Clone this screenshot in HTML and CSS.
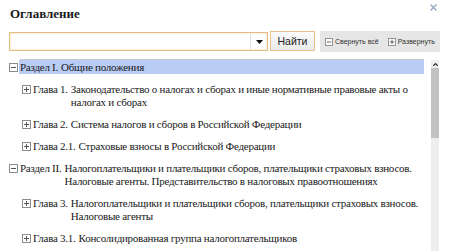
FILE: index.html
```html
<!DOCTYPE html>
<html lang="ru">
<head>
  <meta charset="UTF-8">
  <meta name="viewport" content="width=device-width, initial-scale=1.0">
  <title>Оглавление</title>
  <link rel="stylesheet" href="styles.css">
</head>
<body>
  <svg class="defs" width="0" height="0">
    <symbol id="i-minus" viewBox="0 0 9 9">
      <rect x="0.5" y="0.5" width="8" height="8" fill="#fff" stroke="#8c8c8c"/>
      <path d="M2 4.5h5" stroke="#555"/>
    </symbol>
    <symbol id="i-plus" viewBox="0 0 9 9">
      <rect x="0.5" y="0.5" width="8" height="8" fill="#fff" stroke="#8c8c8c"/>
      <path d="M2 4.5h5M4.5 2v5" stroke="#555"/>
    </symbol>
  </svg>

  <div class="dialog">
    <div class="head">
      <h1 class="title">Оглавление</h1>
      <svg class="close" width="7" height="7" viewBox="0 0 7 7"><path d="M0.5 0.5l6 6M6.5 0.5l-6 6" stroke="#97a6c2" stroke-width="1.4"/></svg>
    </div>

    <div class="search">
      <div class="combo">
        <input class="combo-input" type="text">
        <span class="combo-arrow"><svg width="7" height="4" viewBox="0 0 7 4"><path d="M0 0h7L3.5 4z" fill="#111"/></svg></span>
      </div>
      <button class="find">Найти</button>
      <div class="tools">
        <span class="tool"><svg class="tool-icon"><use href="#i-minus"/></svg>Свернуть всё</span>
        <span class="tool"><svg class="tool-icon"><use href="#i-plus"/></svg>Развернуть</span>
      </div>
    </div>

    <div class="divider"></div>

    <div class="tree-wrap">
      <ul class="tree">
        <li>
          <div class="row">
            <svg class="toggle"><use href="#i-minus"/></svg>
            <div class="label selected"><span class="num">Раздел I.</span><span class="name">Общие положения</span></div>
          </div>
          <ul class="children">
            <li class="row">
              <svg class="toggle"><use href="#i-plus"/></svg>
              <div class="label"><span class="num">Глава 1.</span><span class="name">Законодательство о налогах и сборах и иные нормативные правовые акты о налогах и сборах</span></div>
            </li>
            <li class="row">
              <svg class="toggle"><use href="#i-plus"/></svg>
              <div class="label"><span class="num">Глава 2.</span><span class="name">Система налогов и сборов в Российской Федерации</span></div>
            </li>
            <li class="row">
              <svg class="toggle"><use href="#i-plus"/></svg>
              <div class="label"><span class="num">Глава 2.1.</span><span class="name">Страховые взносы в Российской Федерации</span></div>
            </li>
          </ul>
        </li>
        <li>
          <div class="row">
            <svg class="toggle"><use href="#i-minus"/></svg>
            <div class="label"><span class="num">Раздел II.</span><span class="name">Налогоплательщики и плательщики сборов, плательщики страховых взносов. Налоговые агенты. Представительство в налоговых правоотношениях</span></div>
          </div>
          <ul class="children">
            <li class="row">
              <svg class="toggle"><use href="#i-plus"/></svg>
              <div class="label"><span class="num">Глава 3.</span><span class="name">Налогоплательщики и плательщики сборов, плательщики страховых взносов. Налоговые агенты</span></div>
            </li>
            <li class="row">
              <svg class="toggle"><use href="#i-plus"/></svg>
              <div class="label"><span class="num">Глава 3.1.</span><span class="name">Консолидированная группа налогоплательщиков</span></div>
            </li>
          </ul>
        </li>
      </ul>
      <div class="scrollbar">
        <span class="sb-arrow"><svg width="5" height="3" viewBox="0 0 5 3"><path d="M0.3 2.8L2.5 0.6l2.2 2.2" fill="none" stroke="#222" stroke-width="1.1"/></svg></span>
        <span class="sb-thumb"></span>
      </div>
    </div>
  </div>
</body>
</html>
```

FILE: styles.css
```css
* {
  box-sizing: border-box;
}
body {
  margin: 0;
  background-color: #fff;
  font-family: "Liberation Serif", "Times New Roman", serif;
  color: #1a1a1a;
}
.defs {
  position: absolute;
}
.dialog {
  width: 450px;
  height: 251px;
  overflow: hidden;
  padding: 0 10px 0 9px;
  display: flex;
  flex-direction: column;
}
.head {
  display: flex;
  justify-content: space-between;
  align-items: flex-start;
}
.title {
  margin: 6px 0 0 1px;
  font-size: 13px;
  line-height: 16px;
  font-weight: bold;
}
.close {
  margin: 4px 3px 0 0;
}
.search {
  display: flex;
  align-items: flex-start;
  margin-top: 9px;
  height: 21px;
}
.combo {
  width: 259px;
  height: 19px;
  margin-top: 1px;
  display: flex;
  border: 1px solid #e4bd84;
  box-shadow: inset 0 0 2px rgba(238, 188, 110, 0.7);
  background-color: #fff;
}
.combo-input {
  flex: 1;
  min-width: 0;
  border: none;
  outline: none;
  background: transparent;
}
.combo-arrow {
  width: 17px;
  border-left: 1px solid #e2e2e2;
  display: flex;
  align-items: center;
  justify-content: center;
}
.find {
  margin-left: 2px;
  width: 45px;
  height: 20px;
  padding: 0;
  border: 1px solid #e6c18a;
  background: linear-gradient(#fcfcfc, #e9e9e9);
  font-family: "Liberation Sans", Arial, sans-serif;
  font-size: 10.5px;
  color: #222;
}
.tools {
  margin-left: 5px;
  flex: 1;
  height: 21px;
  background-color: #e6e6e6;
  display: flex;
  align-items: center;
  gap: 9px;
  padding-left: 5px;
  font-family: "Liberation Sans", Arial, sans-serif;
  font-size: 7px;
  color: #333;
  white-space: nowrap;
}
.tool {
  display: flex;
  align-items: center;
  gap: 2px;
}
.tool-icon {
  width: 8px;
  height: 8px;
}
.divider {
  margin: 7px 16px 0 11px;
  border-top: 1px solid #c9c9c9;
}
.tree-wrap {
  flex: 1;
  display: flex;
  min-height: 0;
}
.tree,
.children {
  list-style: none;
  margin: 0;
  padding: 0;
}
.tree {
  flex: 1;
  overflow: hidden;
  font-size: 11px;
  letter-spacing: -0.25px;
  line-height: 13px;
}
.children {
  margin-left: 13px;
}
.row {
  display: flex;
  align-items: flex-start;
  margin-bottom: 8px;
}
.toggle {
  flex: none;
  width: 9px;
  height: 9px;
  margin: 3px 1px 0 0;
}
.label {
  flex: 1;
  display: flex;
  padding: 1px 0 0 1px;
}
.label.selected {
  background-color: #b8ccf4;
}
.num {
  white-space: nowrap;
  margin-right: 3px;
}
.name {
  flex: 1;
}
.scrollbar {
  width: 8px;
  margin: 0 1px 0 7px;
  background-color: #eeeeee;
  display: flex;
  flex-direction: column;
}
.sb-arrow {
  height: 8px;
  display: flex;
  justify-content: center;
  align-items: center;
}
.sb-thumb {
  height: 70px;
  background-color: #c2c2c2;
}
```
